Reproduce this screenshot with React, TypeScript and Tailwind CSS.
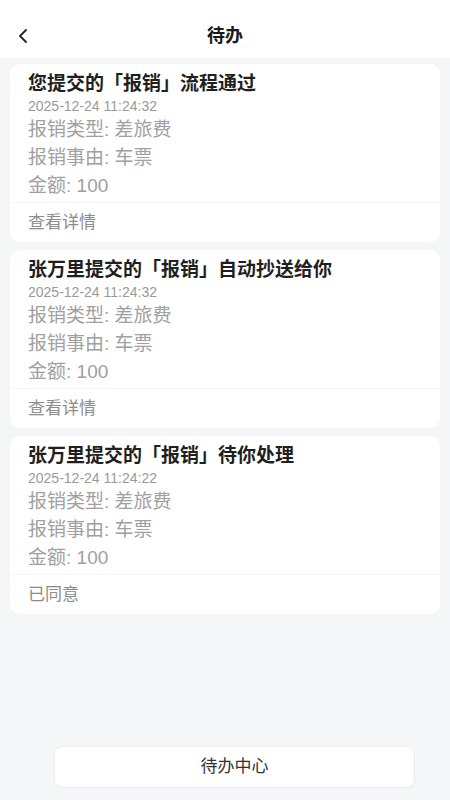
import { ChevronLeft } from "lucide-react";

type Todo = {
  title: string;
  time: string;
  type: string;
  reason: string;
  amount: string;
  action: string;
};

const todos: Todo[] = [
  { title: "您提交的「报销」流程通过", time: "2025-12-24 11:24:32", type: "差旅费", reason: "车票", amount: "100", action: "查看详情" },
  { title: "张万里提交的「报销」自动抄送给你", time: "2025-12-24 11:24:32", type: "差旅费", reason: "车票", amount: "100", action: "查看详情" },
  { title: "张万里提交的「报销」待你处理", time: "2025-12-24 11:24:22", type: "差旅费", reason: "车票", amount: "100", action: "已同意" },
];

const font = { fontFamily: '"Liberation Sans", "Noto Sans CJK SC", sans-serif' };

function TodoCard({ item }: { item: Todo }) {
  return (
    <div className="bg-white rounded-[10px]">
      <div className="px-[18px] pt-[8px] pb-[2px]">
        <div className="text-[19px] leading-[24px] font-bold text-[#1f1f1f]">{item.title}</div>
        <div className="text-[14px] leading-[20px] text-[#9a9a9a]">{item.time}</div>
        <div className="text-[19px] leading-[28px] text-[#a0a0a0]">报销类型: {item.type}</div>
        <div className="text-[19px] leading-[28px] text-[#a0a0a0]">报销事由: {item.reason}</div>
        <div className="text-[19px] leading-[28px] text-[#a0a0a0]">金额: {item.amount}</div>
      </div>
      <div className="border-t border-[#f6f6f6] px-[18px] h-[40px] flex items-center text-[17px] text-[#8c8c8c]">
        {item.action}
      </div>
    </div>
  );
}

export default function App() {
  return (
    <main style={font} className="w-full min-h-screen h-[800px] bg-[#f5f6f8] flex flex-col">
      <header className="h-[58px] bg-white relative flex items-center justify-center shrink-0">
        <button className="absolute left-[11px] top-[24px] text-[#222]">
          <ChevronLeft size={24} strokeWidth={1.8} />
        </button>
        <span className="text-[18px] font-bold text-[#1a1a1a] mt-[14px]">待办</span>
      </header>
      <section className="px-[10px] pt-[6px] flex flex-col gap-[8px]">
        {todos.map((t, i) => (
          <TodoCard key={i} item={t} />
        ))}
      </section>
      <div className="mt-auto pb-[12px] pl-[54px]">
        <button className="w-[361px] h-[42px] bg-white rounded-[8px] border border-[#ececec] text-[17px] text-[#333]">
          待办中心
        </button>
      </div>
    </main>
  );
}
